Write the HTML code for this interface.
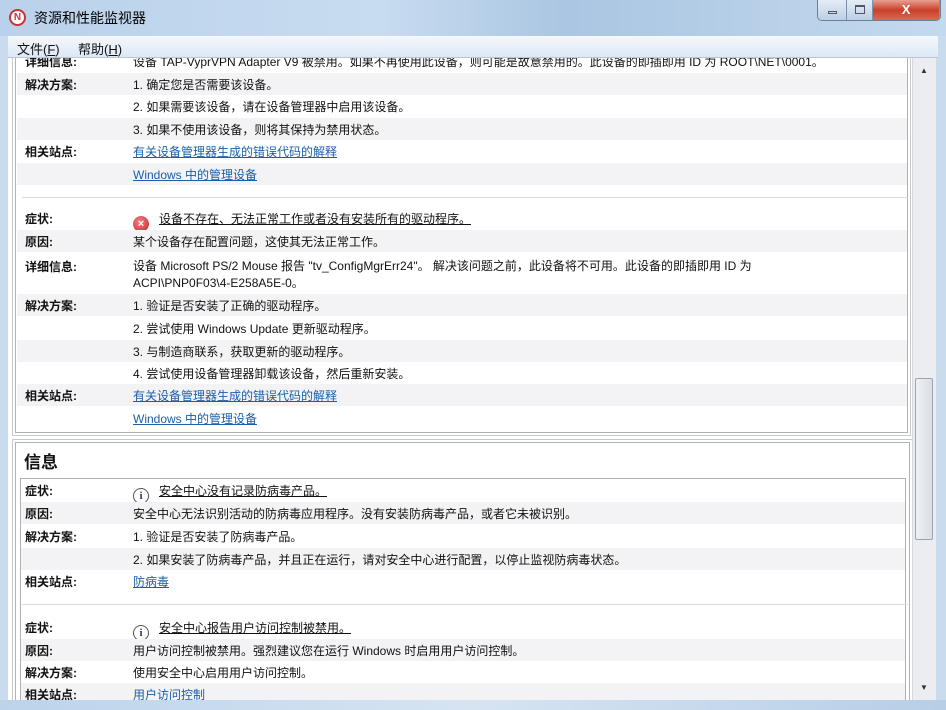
<!DOCTYPE html>
<html><head><meta charset="utf-8"><style>
*{margin:0;padding:0;box-sizing:border-box}
body{width:946px;height:710px;overflow:hidden;position:relative;background:#c9dcee;font-family:"Liberation Sans","Noto Sans CJK SC",sans-serif;font-size:12px;color:#111}
.title{position:absolute;left:0;top:0;width:946px;height:36px;background:linear-gradient(90deg,#b9d1ea 0%,#c8dcf0 40%,#aac6e2 60%,#c4d9ee 100%)}
.title span{position:absolute;left:34px;top:8px;font-size:14px;color:#000}
.logo{position:absolute;left:9px;top:9px;width:17px;height:17px;border-radius:50%;background:#fff;border:2px solid #c33;font-size:10px;font-weight:bold;color:#c33;text-align:center;line-height:13px}
.btns{position:absolute;left:817px;top:0;height:21px;width:124px;border:1px solid #6b7f98;border-top:none;border-radius:0 0 5px 5px;overflow:hidden;display:flex}
.btns div{height:20px;background:linear-gradient(#e4edf7,#bccfe5);border-right:1px solid #7f93ab;position:relative}
.btns .x{background:linear-gradient(#e8a090,#c9402b 50%,#d86a50);color:#fff;font-weight:bold;text-align:center;font-size:13px;line-height:19px}
.menu{position:absolute;left:8px;top:36px;width:930px;height:22px;background:linear-gradient(#f5f8fc,#dde8f4);border-bottom:1px solid #b8c8da;font-size:13px}
.menu span{position:absolute;top:3px}
.content{position:absolute;left:8px;top:58px;width:904px;height:642px;background:#fff;overflow:hidden}
.sb{position:absolute;left:912px;top:58px;width:24px;height:642px;background:#ebedf0;border-left:1px solid #d5d8dc}
.thumb{position:absolute;left:915px;top:378px;width:18px;height:162px;border:1px solid #9aa5b3;border-radius:2px;background:linear-gradient(90deg,#eef1f4,#d9dee4)}
.box{position:absolute;border:1px solid #aeb2b6;box-shadow:0 0 0 2px #fff,0 0 0 3px #c7cacd}
.r{position:absolute;left:9px;width:890px;height:22px}
.g{background:#f3f3f6}
.l{position:absolute;left:8px;top:3px;font-weight:bold;font-size:12px}
.v{position:absolute;left:116px;top:3px;white-space:nowrap}
a{color:#1a5fa8;text-decoration:underline}
.hr{position:absolute;left:14px;width:886px;height:1px;background:#dcdcdc}
.ic{display:inline-block;width:16px;height:16px;border-radius:50%;vertical-align:-4px;margin-right:10px;text-align:center;font-size:11px;line-height:16px;font-weight:bold}
.err{background:radial-gradient(circle at 40% 35%,#f08080,#c0282d);color:#fff}
.inf{border:1px solid #555;color:#336;background:#fff;font-family:"Liberation Serif",serif;line-height:14px}
u{text-decoration:underline}
.bot{position:absolute;left:0;top:700px;width:946px;height:10px;background:linear-gradient(90deg,#bcd3ea,#d6e4f2 50%,#b7cee6)}
</style></head><body>
<div class="title"><div class="logo">N</div><span>资源和性能监视器</span>
<div class="btns"><div style="width:29px"><i style="position:absolute;left:10px;top:11px;width:9px;height:3px;border:1px solid #556"></i></div><div style="width:27px"><i style="position:absolute;left:8px;top:5px;width:10px;height:9px;border:1px solid #556;border-top-width:2px"></i></div><div class="x" style="width:68px">X</div></div></div>
<div class="menu"><span style="left:9px">文件(<u>F</u>)</span><span style="left:70px">帮助(<u>H</u>)</span></div>
<div class="content">
<div class="box" style="left:7px;top:-10px;width:893px;height:385px"></div>
<div class="r" style="top:-8px"><span class="l">详细信息:</span><span class="v">设备 TAP-VyprVPN Adapter V9 被禁用。如果不再使用此设备，则可能是故意禁用的。此设备的即插即用 ID 为 ROOT\NET\0001。</span></div>
<div class="r g" style="top:15px"><span class="l">解决方案:</span><span class="v">1. 确定您是否需要该设备。</span></div>
<div class="r" style="top:37px"><span class="v">2. 如果需要该设备，请在设备管理器中启用该设备。</span></div>
<div class="r g" style="top:60px"><span class="v">3. 如果不使用该设备，则将其保持为禁用状态。</span></div>
<div class="r" style="top:82px"><span class="l">相关站点:</span><span class="v"><a>有关设备管理器生成的错误代码的解释</a></span></div>
<div class="r g" style="top:105px"><span class="v"><a>Windows 中的管理设备</a></span></div>
<div class="hr" style="top:139px"></div>
<div class="r" style="top:149px"><span class="l">症状:</span><span class="v"><span class="ic err">×</span><u>设备不存在、无法正常工作或者没有安装所有的驱动程序。</u></span></div>
<div class="r g" style="top:172px"><span class="l">原因:</span><span class="v">某个设备存在配置问题，这使其无法正常工作。</span></div>
<div class="r" style="top:197px;height:38px"><span class="l">详细信息:</span><span class="v" style="line-height:17px">设备 Microsoft PS/2 Mouse 报告 "tv_ConfigMgrErr24"。 解决该问题之前，此设备将不可用。此设备的即插即用 ID 为<br>ACPI\PNP0F03\4-E258A5E-0。</span></div>
<div class="r g" style="top:236px"><span class="l">解决方案:</span><span class="v">1. 验证是否安装了正确的驱动程序。</span></div>
<div class="r" style="top:259px"><span class="v">2. 尝试使用 Windows Update 更新驱动程序。</span></div>
<div class="r g" style="top:282px"><span class="v">3. 与制造商联系，获取更新的驱动程序。</span></div>
<div class="r" style="top:304px"><span class="v">4. 尝试使用设备管理器卸载该设备，然后重新安装。</span></div>
<div class="r g" style="top:326px"><span class="l">相关站点:</span><span class="v"><a>有关设备管理器生成的错误代码的解释</a></span></div>
<div class="r" style="top:349px"><span class="v"><a>Windows 中的管理设备</a></span></div>
<div class="box" style="left:7px;top:384px;width:895px;height:300px"></div>
<div style="position:absolute;left:16px;top:390px;font-size:17px;font-weight:bold">信息</div>
<div class="box" style="left:12px;top:420px;width:886px;height:280px;box-shadow:none"></div>
<div class="r" style="top:421px;left:13px;width:884px"><span class="l" style="left:4px">症状:</span><span class="v" style="left:112px"><span class="ic inf">i</span><u>安全中心没有记录防病毒产品。</u></span></div>
<div class="r g" style="top:444px;left:13px;width:884px"><span class="l" style="left:4px">原因:</span><span class="v" style="left:112px">安全中心无法识别活动的防病毒应用程序。没有安装防病毒产品，或者它未被识别。</span></div>
<div class="r" style="top:467px;left:13px;width:884px"><span class="l" style="left:4px">解决方案:</span><span class="v" style="left:112px">1. 验证是否安装了防病毒产品。</span></div>
<div class="r g" style="top:490px;left:13px;width:884px"><span class="v" style="left:112px">2. 如果安装了防病毒产品，并且正在运行，请对安全中心进行配置，以停止监视防病毒状态。</span></div>
<div class="r" style="top:512px;left:13px;width:884px"><span class="l" style="left:4px">相关站点:</span><span class="v" style="left:112px"><a>防病毒</a></span></div>
<div class="hr" style="top:546px"></div>
<div class="r" style="top:558px;left:13px;width:884px"><span class="l" style="left:4px">症状:</span><span class="v" style="left:112px"><span class="ic inf">i</span><u>安全中心报告用户访问控制被禁用。</u></span></div>
<div class="r g" style="top:581px;left:13px;width:884px"><span class="l" style="left:4px">原因:</span><span class="v" style="left:112px">用户访问控制被禁用。强烈建议您在运行 Windows 时启用用户访问控制。</span></div>
<div class="r" style="top:603px;left:13px;width:884px"><span class="l" style="left:4px">解决方案:</span><span class="v" style="left:112px">使用安全中心启用用户访问控制。</span></div>
<div class="r g" style="top:625px;left:13px;width:884px"><span class="l" style="left:4px">相关站点:</span><span class="v" style="left:112px"><a>用户访问控制</a></span></div>
</div>
<div class="sb"><div style="position:absolute;left:7px;top:8px;font-size:8px;color:#333">▲</div><div style="position:absolute;left:7px;top:625px;font-size:8px;color:#333">▼</div></div>
<div class="thumb"></div>
<div class="bot"></div>
</body></html>
